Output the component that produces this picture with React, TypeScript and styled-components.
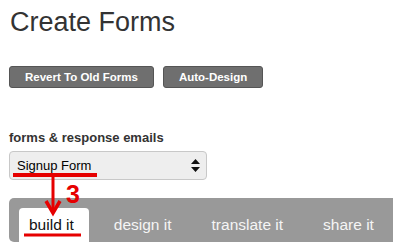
import styled, { createGlobalStyle } from 'styled-components';

const GlobalStyle = createGlobalStyle`
  body {
    margin: 0;
    background: #fff;
    font-family: "Liberation Sans", Arial, sans-serif;
  }
`;

const Page = styled.div`
  position: relative;
  width: 393px;
  height: 252px;
  overflow: hidden;
  padding-left: 9px;
  box-sizing: border-box;
`;

const Title = styled.h1`
  margin: 0;
  padding: 9px 0 0 1px;
  font-size: 27px;
  line-height: 27px;
  font-weight: normal;
  color: #333;
`;

const ButtonRow = styled.div`
  display: flex;
  gap: 9px;
  margin-top: 30px;
`;

const GrayButton = styled.button`
  height: 22px;
  padding: 0 15px;
  border: 1px solid #555;
  border-radius: 3px;
  background: #6f6f6f;
  color: #fff;
  font-family: inherit;
  font-size: 11.5px;
  font-weight: bold;
`;

const Label = styled.div`
  margin-top: 43px;
  font-size: 13px;
  line-height: 14px;
  font-weight: bold;
  color: #333;
`;

const Select = styled.div`
  display: flex;
  align-items: center;
  justify-content: space-between;
  box-sizing: border-box;
  width: 198px;
  height: 29px;
  margin-top: 6px;
  padding: 0 6px 0 7px;
  border: 1px solid #c8c8c8;
  border-radius: 4px;
  background: #eee;
  font-size: 13px;
  color: #000;
`;

const TabBar = styled.div`
  display: flex;
  align-items: flex-end;
  gap: 15px;
  height: 44px;
  margin-top: 18px;
  padding-left: 10px;
  border-radius: 5px 0 0 5px;
  background: #999;
`;

const Tab = styled.div<{ $active?: boolean }>`
  display: flex;
  align-items: center;
  height: 34px;
  padding: 0 15px 0 10px;
  border-radius: 4px 4px 0 0;
  font-size: 15.5px;
  color: ${p => (p.$active ? '#111' : '#f5f5f5')};
  background: ${p => (p.$active ? '#fff' : 'transparent')};
`;

const Marks = styled.svg`
  position: absolute;
  top: 0;
  left: 0;
  pointer-events: none;
`;

const SelectArrows = () => (
  <svg width="9" height="14" viewBox="0 0 9 14">
    <path d="M4.5 0 L9 5 L0 5 Z M0 8 L9 8 L4.5 13 Z" fill="#111" />
  </svg>
);

const tabs = ['build it', 'design it', 'translate it', 'share it'];

export default function App() {
  return (
    <>
      <GlobalStyle />
      <Page>
        <Title>Create Forms</Title>
        <ButtonRow>
          <GrayButton>Revert To Old Forms</GrayButton>
          <GrayButton>Auto-Design</GrayButton>
        </ButtonRow>
        <Label>forms &amp; response emails</Label>
        <Select>
          <span>Signup Form</span>
          <SelectArrows />
        </Select>
        <TabBar>
          {tabs.map((t, i) => (
            <Tab key={t} $active={i === 0}>
              {t}
            </Tab>
          ))}
        </TabBar>
        <Marks width="393" height="252" viewBox="0 0 393 252">
          <g stroke="#e60000" fill="none">
            <line x1="13" y1="175" x2="97" y2="175" strokeWidth="4" />
            <line x1="53" y1="175" x2="53" y2="212" strokeWidth="3" />
            <polyline points="46,201 53,213 60,201" strokeWidth="3.5" />
            <line x1="24" y1="235" x2="81" y2="235" strokeWidth="3" />
          </g>
          <text
            x="66"
            y="203"
            fill="#e60000"
            fontFamily="Liberation Sans, Arial, sans-serif"
            fontWeight="bold"
            fontSize="25"
          >
            3
          </text>
        </Marks>
      </Page>
    </>
  );
}
